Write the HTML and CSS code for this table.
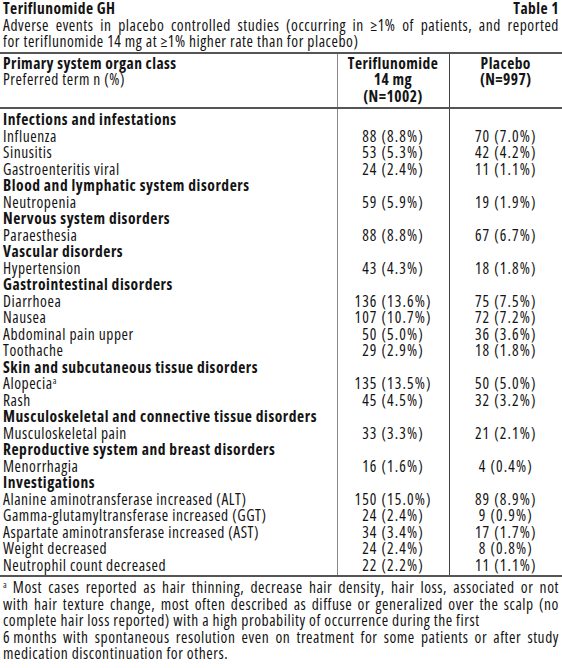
FILE: index.html
```html
<!DOCTYPE html>
<html lang="en">
<head>
  <meta charset="UTF-8" />
  <meta name="viewport" content="width=device-width, initial-scale=1.0"/>
  <title>Teriflunomide GH - Table 1</title>
  <link rel="stylesheet" href="styles.css">
</head>
<body>

  <div class="title-row">
    <span>Teriflunomide GH</span>
    <span>Table 1</span>
  </div>
  <p class="subtitle">
    <span class="line full">Adverse events in placebo controlled studies (occurring in ≥1% of patients, and reported</span>
    <span class="line">for teriflunomide 14&nbsp;mg at ≥1% higher rate than for placebo)</span>
  </p>

  <table class="ae-table">
    <colgroup>
      <col class="col-term">
      <col class="col-drug">
      <col class="col-placebo">
    </colgroup>
    <thead>
      <tr>
        <th class="term-head"><strong>Primary system organ class</strong><br><span class="plain">Preferred term n (%)</span></th>
        <th>Teriflunomide<br>14 mg<br>(N=1002)</th>
        <th>Placebo<br>(N=997)</th>
      </tr>
    </thead>
    <tbody>
      <tr class="soc first"><td>Infections and infestations</td><td></td><td></td></tr>
      <tr><td>Influenza</td><td>88 (8.8%)</td><td>70 (7.0%)</td></tr>
      <tr><td>Sinusitis</td><td>53 (5.3%)</td><td>42 (4.2%)</td></tr>
      <tr><td>Gastroenteritis viral</td><td>24 (2.4%)</td><td>11 (1.1%)</td></tr>
      <tr class="soc"><td>Blood and lymphatic system disorders</td><td></td><td></td></tr>
      <tr><td>Neutropenia</td><td>59 (5.9%)</td><td>19 (1.9%)</td></tr>
      <tr class="soc"><td>Nervous system disorders</td><td></td><td></td></tr>
      <tr><td>Paraesthesia</td><td>88 (8.8%)</td><td>67 (6.7%)</td></tr>
      <tr class="soc"><td>Vascular disorders</td><td></td><td></td></tr>
      <tr><td>Hypertension</td><td>43 (4.3%)</td><td>18 (1.8%)</td></tr>
      <tr class="soc"><td>Gastrointestinal disorders</td><td></td><td></td></tr>
      <tr><td>Diarrhoea</td><td>136 (13.6%)</td><td>75 (7.5%)</td></tr>
      <tr><td>Nausea</td><td>107 (10.7%)</td><td>72 (7.2%)</td></tr>
      <tr><td>Abdominal pain upper</td><td>50 (5.0%)</td><td>36 (3.6%)</td></tr>
      <tr><td>Toothache</td><td>29 (2.9%)</td><td>18 (1.8%)</td></tr>
      <tr class="soc"><td>Skin and subcutaneous tissue disorders</td><td></td><td></td></tr>
      <tr><td>Alopecia<sup>a</sup></td><td>135 (13.5%)</td><td>50 (5.0%)</td></tr>
      <tr><td>Rash</td><td>45 (4.5%)</td><td>32 (3.2%)</td></tr>
      <tr class="soc"><td>Musculoskeletal and connective tissue disorders</td><td></td><td></td></tr>
      <tr><td>Musculoskeletal pain</td><td>33 (3.3%)</td><td>21 (2.1%)</td></tr>
      <tr class="soc"><td>Reproductive system and breast disorders</td><td></td><td></td></tr>
      <tr><td>Menorrhagia</td><td>16 (1.6%)</td><td>4 (0.4%)</td></tr>
      <tr class="soc"><td>Investigations</td><td></td><td></td></tr>
      <tr><td>Alanine aminotransferase increased (ALT)</td><td>150 (15.0%)</td><td>89 (8.9%)</td></tr>
      <tr><td>Gamma-glutamyltransferase increased (GGT)</td><td>24 (2.4%)</td><td>9 (0.9%)</td></tr>
      <tr><td>Aspartate aminotransferase increased (AST)</td><td>34 (3.4%)</td><td>17 (1.7%)</td></tr>
      <tr><td>Weight decreased</td><td>24 (2.4%)</td><td>8 (0.8%)</td></tr>
      <tr class="last"><td>Neutrophil count decreased</td><td>22 (2.2%)</td><td>11 (1.1%)</td></tr>
    </tbody>
  </table>

  <div class="footnote">
    <span class="line full"><sup>a</sup> Most cases reported as hair thinning, decrease hair density, hair loss, associated or not</span>
    <span class="line full">with hair texture change, most often described as diffuse or generalized over the scalp (no</span>
    <span class="line">complete hair loss reported) with a high probability of occurrence during the first</span>
    <span class="line full">6&#8201;months with spontaneous resolution even on treatment for some patients or after study</span>
    <span class="line">medication discontinuation for others.</span>
  </div>

</body>
</html>
```

FILE: styles.css
```css
body {
  margin: 0;
  font-family: 'Open Sans', 'DejaVu Sans Condensed', sans-serif;
  font-stretch: 75%;
  font-size: 15.5px;
  letter-spacing: 0.55px;
  line-height: 16.5px;
  color: #141414;
  background-color: #ffffff;
}

/* bold headings */
strong,
th,
.title-row,
.soc td:first-child {
  font-weight: bold;
  letter-spacing: 0.45px;
}

.title-row {
  display: flex;
  justify-content: space-between;
  padding: 0 3px;
}

.subtitle {
  margin: 0;
  padding: 0 3px 2px;
}

.line {
  display: block;
  white-space: nowrap;
}

.full {
  white-space: normal;
  text-align: justify;
  text-align-last: justify;
}

.ae-table {
  width: 100%;
  border-collapse: collapse;
  table-layout: fixed;
}

.col-term {
  width: 337px;
}

.col-drug {
  width: 112px;
}

.ae-table th {
  text-align: center;
  vertical-align: top;
  padding: 1px 0 3px;
  border-top: 2px solid #555;
  border-bottom: 2px solid #555;
}

.ae-table th.term-head {
  text-align: left;
  padding-left: 3px;
}

.plain {
  font-weight: normal;
  letter-spacing: 0.55px;
}

.ae-table td {
  padding: 0;
  text-align: center;
  white-space: nowrap;
  letter-spacing: 1.1px;
}

.ae-table td:first-child {
  text-align: left;
  padding-left: 3px;
  letter-spacing: 0.55px;
}

.ae-table th + th,
.ae-table td + td {
  border-left: 1px solid #888;
}

.ae-table th + th + th,
.ae-table td + td + td {
  border-left-color: #444;
}

.first td {
  padding-top: 2px;
}

.last td {
  padding-bottom: 2px;
  border-bottom: 2px solid #555;
}

sup {
  font-size: 9px;
  line-height: 0;
  letter-spacing: 0;
  vertical-align: 5px;
}

.footnote {
  padding: 2px 3px 0;
}
```
